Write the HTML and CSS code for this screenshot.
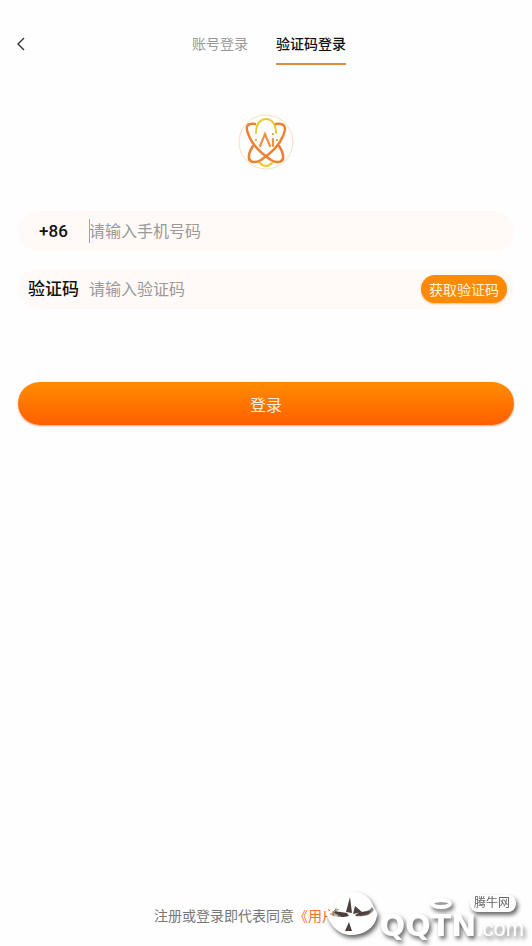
FILE: index.html
```html
<!DOCTYPE html>
<html lang="zh-CN">
<head>
    <meta charset="UTF-8">
    <meta name="viewport" content="width=device-width, initial-scale=1.0">
    <title>验证码登录</title>
    <link rel="stylesheet" href="styles.css">
</head>
<body>
    <header class="topbar">
        <button type="button" class="back-button" aria-label="返回">
            <svg width="10" height="16" viewBox="0 0 10 16" fill="none" stroke="#333" stroke-width="1.4"><path d="M8 2 2 8l6 6"/></svg>
        </button>
        <nav class="tabs">
            <a href="#account" class="tab">账号登录</a>
            <a href="#code" class="tab active">验证码登录</a>
        </nav>
    </header>

    <main class="content">
        <svg class="logo" viewBox="0 0 56 56" fill="none" stroke-linecap="round" role="img" aria-label="Ai">
            <circle cx="28" cy="28" r="27" stroke="#f8dfc0" stroke-width="1"/>
            <g stroke="#eacb32" stroke-width="2">
                <path d="M18 19C18 9 23 5 28 5s10 4 10 14"/>
                <path d="M21 48q7 8 14 0"/>
            </g>
            <g stroke="#e98232" stroke-width="2.5">
                <path d="M17 10c-9-1-10 3-6 12 4 10 13 18 22 24 7 4 13 2 12-4 0-4-2-7-4-10"/>
                <path d="M38 10c9-1 11 3 7 12-4 10-13 18-22 24-7 4-13 2-12-4 0-4 2-7 4-10"/>
            </g>
            <path d="m22 32 5-12 5 12M35 25v7" stroke="#ee9142" stroke-width="2.2"/>
            <path d="M35 20v.2M18 26v.2M39 26v.2" stroke="#d8a52c" stroke-width="2"/>
        </svg>

        <form class="login-form">
            <div class="form-row">
                <label for="phone">+86</label>
                <input type="tel" id="phone" class="focused" placeholder="请输入手机号码">
            </div>
            <div class="form-row">
                <label for="code">验证码</label>
                <input type="text" id="code" placeholder="请输入验证码">
                <button type="button" class="code-button">获取验证码</button>
            </div>
            <button type="submit" class="login-button">登录</button>
        </form>
    </main>

    <footer class="agreement">
        注册或登录即代表同意<a href="#terms">《用户协议》</a>
    </footer>

    <!-- Site mark over the bottom corner -->
    <div class="watermark">
        <svg class="mark-ball" viewBox="0 0 54 46">
            <path fill-rule="evenodd" d="M1 20c4 2 7 1 9-2C13 8 20 2 28 2c12 0 19 6 22 16 2 3 4 5 3 8-2 12-13 19-26 19C15 45 5 35 1 20zM12 19l-7 5c5 3 12 4 19 2l-4-3-9 0 4-4zM31 26c8 1 15 0 19-6l-2-3c-2 4-7 5-13 5z" fill="#fff"/>
            <path d="M26 7l2 16-6-1zM31 16l7 6-9 2zM13 17l-3 4 13 2 2 3-6 1-9-4zM31 25c6 1 13 0 16-4l-9 1zM25 32l3 9-7 0z" fill="#4b403b"/>
        </svg>
        <span class="mark-name">QQTN</span><span class="mark-domain">.com</span>
        <span class="mark-ring"></span>
        <span class="mark-tag">腾牛网</span>
    </div>
</body>
</html>
```

FILE: styles.css
```css
* {
    box-sizing: border-box;
}

body {
    margin: 0;
    min-height: 100vh;
    display: flex;
    flex-direction: column;
    position: relative;
    overflow-x: hidden;
    background-color: #fefefe;
    font-family: Roboto, "Noto Sans CJK SC", sans-serif;
    color: #111;
}

button, input {
    font-family: inherit;
    border: none;
}

a {
    text-decoration: none;
}

/* Top bar */
.topbar {
    display: grid;
    grid-template-columns: 44px 1fr 38px;
    align-items: center;
    padding-top: 22px;
}

.back-button {
    display: flex;
    justify-content: flex-start;
    padding: 12px 16px;
    background: none;
}

.tabs {
    display: flex;
    justify-content: center;
    gap: 28px;
}

.tab {
    padding: 11px 0 8px;
    border-bottom: 2px solid transparent;
    font-size: 14px;
    line-height: 22px;
    color: #999;
}

.tab.active {
    color: #111;
    font-weight: 500;
    border-bottom-color: #e08a3c;
}

/* Content */
.content {
    flex: 1;
    padding: 0 18px;
}

.logo {
    display: block;
    width: 56px;
    height: 56px;
    margin: 49px auto 41px;
}

.login-form {
    display: flex;
    flex-direction: column;
    gap: 18px;
}

.form-row {
    display: flex;
    align-items: center;
    height: 40px;
    padding-right: 7px;
    border-radius: 20px;
    background-color: #fff9f7;
}

.form-row label {
    width: 71px;
    text-align: center;
    font-size: 17px;
    line-height: 24px;
    font-weight: 500;
}

.form-row input {
    flex: 1;
    min-width: 0;
    height: 24px;
    padding: 0;
    background: none;
    font-size: 16px;
    outline: none;
}

.form-row input.focused {
    box-shadow: inset 1px 0 #ff9800;
}

.form-row input::placeholder {
    color: #999;
}

.code-button {
    height: 28px;
    padding: 0 8px;
    border-radius: 14px;
    background-color: #ff8a05;
    box-shadow: 0 1px 2px rgba(200, 100, 20, 0.4);
    color: #fff3dc;
    font-size: 14px;
}

.login-button {
    height: 43px;
    margin-top: 55px;
    border-radius: 22px;
    background: linear-gradient(#ff8c00, #ff5f00);
    box-shadow: 0 1px 2px rgba(200, 80, 20, 0.5);
    color: #ffeedb;
    font-size: 16px;
}

/* Agreement */
.agreement {
    padding-bottom: 20px;
    text-align: center;
    font-size: 14px;
    line-height: 20px;
    color: #777;
}

.agreement a {
    color: #f37321;
}

/* Watermark */
.watermark {
    position: absolute;
    right: 8px;
    bottom: 5px;
    display: flex;
    align-items: baseline;
    color: #fff;
    line-height: 24px;
    filter: drop-shadow(2px 3px 2px rgba(0, 0, 0, 0.6));
}

.mark-ball {
    width: 54px;
    height: 46px;
    margin: 0 2px -4px 0;
}

.mark-name {
    font-family: "DejaVu Sans", sans-serif;
    font-size: 30px;
    font-weight: 700;
}

.mark-domain {
    font-family: "Liberation Sans", sans-serif;
    font-size: 22px;
}

.mark-ring {
    position: absolute;
    top: 8px;
    left: 106px;
    width: 22px;
    height: 11px;
    border: 4px solid #fff;
    border-radius: 50%;
}

.mark-tag {
    position: absolute;
    top: 5px;
    right: 8px;
    padding: 0 6px 0 4px;
    border-radius: 8px;
    background-color: #fff;
    color: #666;
    font-size: 12px;
    line-height: 17px;
}
```
